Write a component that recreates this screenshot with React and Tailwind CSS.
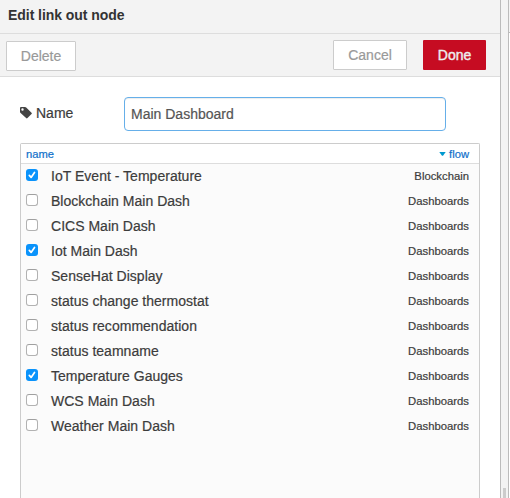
const rows = [
  ["IoT Event - Temperature", "Blockchain", true],
  ["Blockchain Main Dash", "Dashboards", false],
  ["CICS Main Dash", "Dashboards", false],
  ["Iot Main Dash", "Dashboards", true],
  ["SenseHat Display", "Dashboards", false],
  ["status change thermostat", "Dashboards", false],
  ["status recommendation", "Dashboards", false],
  ["status teamname", "Dashboards", false],
  ["Temperature Gauges", "Dashboards", true],
  ["WCS Main Dash", "Dashboards", false],
  ["Weather Main Dash", "Dashboards", false],
];

function Checkbox({ checked }) {
  return checked ? (
    <span className="mb-[3px] flex h-3 w-3 shrink-0 items-center justify-center rounded-[3px] bg-[#0a93fb]">
      <svg width="12" height="12" viewBox="0 0 12 12" fill="none" stroke="#fff" strokeWidth="1.7" strokeLinecap="round" strokeLinejoin="round">
        <path d="M3.3 6.400 5.100 8.400 8.500 3.400" />
      </svg>
    </span>
  ) : (
    <span className="mb-[3px] h-3 w-3 shrink-0 rounded-[3px] border border-[#b2b2b2] border-t-[#a0a0a0] bg-white" />
  );
}

function Row({ name, flow, checked }) {
  return (
    <div className="flex h-[25px] items-center pl-[5px] pr-2.5">
      <Checkbox checked={checked} />
      <span className="ml-[13px] flex-1 text-[14px] tracking-[0.02px]">{name}</span>
      <span className="text-[11.3px]">{flow}</span>
    </div>
  );
}

export default function App() {
  return (
    <div className="flex h-[498px] w-[510px] overflow-hidden whitespace-nowrap bg-white font-['Liberation_Sans',Arial,sans-serif] text-[14px] text-[#3c3c3c] [-webkit-text-stroke:0.2px]">
      <main className="flex w-[501px] shrink-0 flex-col border-r border-[#bbb]">
        <header className="flex h-[34px] shrink-0 items-center border-b border-[#ddd] bg-[#f3f3f3] pb-[3px] pl-2 font-bold tracking-[-0.05px] text-[#333] [-webkit-text-stroke:0]">
          Edit link out node
        </header>
        <div className="flex h-[43px] shrink-0 items-start border-b border-[#ddd] bg-[#f3f3f3] pl-1.5 pr-[14px] pt-1.5">
          <button className="mt-px h-[30px] w-[70px] rounded-[1px] border border-[#ccc] bg-white text-[#999]">Delete</button>
          <button className="ml-auto h-[30px] w-[74px] rounded-[1px] border border-[#ccc] bg-white text-[#999]">Cancel</button>
          <button className="ml-4 h-[30px] w-[63px] rounded-[1px] bg-[#c60c22] text-[#eee] [-webkit-text-stroke:0.4px]">Done</button>
        </div>
        <div className="flex min-h-0 flex-1 flex-col pl-5 pr-5 pt-5">
          <label className="flex h-[34px] shrink-0 items-center">
            <span className="flex w-[104px] items-center gap-1 pb-0.5">
              <svg width="12" height="12" viewBox="0 0 12 12" fill="#444">
                <path fillRule="evenodd" d="M1 0h4q.7 0 1.2.5l5.300 5.200q.7.7 0 1.400l-4 4q-.7.7-1.400 0L.6 6Q0 5.400 0 4.700V1Q0 0 1 0Zm1.500 1.300a1.200 1.200 0 1 0 0 2.400 1.200 1.200 0 0 0 0-2.400Z" />
              </svg>
              Name
            </span>
            <input readOnly value="Main Dashboard" className="h-[34px] w-[322px] rounded-[4px] border border-[#66afe9] bg-white px-1.5 text-[14px] text-[#555] shadow-[inset_0_1px_1px_rgba(0,0,0,0.075)] outline-none" />
          </label>
          <section className="mt-3 flex min-h-0 flex-1 flex-col rounded-t-[2px] border border-b-0 border-[#ccc] bg-[#fbfbfb]">
            <div className="flex h-[20px] shrink-0 items-center justify-between border-b border-[#ddd] bg-white pl-[5px] pr-2.5 pt-px text-[11.200px] text-[#1070ca]">
              <span>name</span>
              <span className="flex items-center gap-[3px]">
                <svg width="7" height="4" viewBox="0 0 7 4" fill="#0099cf"><path d="M.3 0h6.400L4 3.700H3Z" /></svg>
                flow
              </span>
            </div>
            {rows.map(([name, flow, checked]) => (
              <Row key={name} name={name} flow={flow} checked={checked} />
            ))}
          </section>
        </div>
      </main>
      <div className="flex w-[8px] shrink-0 flex-col justify-end border-r border-[#bbb] bg-[#f3f3f3]">
        <div className="ml-0.5 h-[10px] w-[3px] bg-[#ccc]" />
      </div>
      <div className="h-[33px] w-px shrink-0 border-b border-[#bbb] bg-[#f3f3f3]" />
    </div>
  );
}
